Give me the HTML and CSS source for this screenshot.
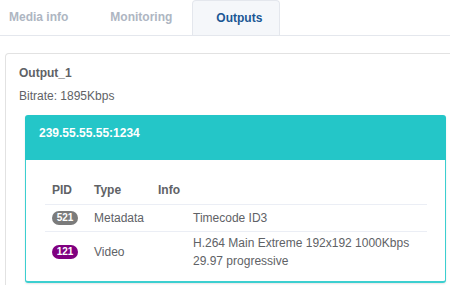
FILE: index.html
```html
<html lang="en">
<head>
<meta charset="UTF-8">
<meta name="viewport" content="width=device-width, initial-scale=1.0">
<title>Outputs</title>
<link rel="stylesheet" href="styles.css">
</head>
<body>
<div class="tabs">
  <div class="tab first">Media info</div>
  <div class="tab">Monitoring</div>
  <div class="tab active">Outputs</div>
</div>
<div class="card">
  <div class="output-name">Output_1</div>
  <div class="bitrate">Bitrate: 1895Kbps</div>
  <div class="stream">
    <div class="stream-head">239.55.55.55:1234</div>
    <div class="stream-body">
      <div class="pid-table">
        <div class="row head">
          <div class="cell">PID</div>
          <div class="cell">Type</div>
          <div class="cell">Info</div>
          <div class="cell"></div>
        </div>
        <div class="row">
          <div class="cell"><span class="badge gray">521</span></div>
          <div class="cell">Metadata</div>
          <div class="cell"></div>
          <div class="cell">Timecode ID3</div>
        </div>
        <div class="row tall">
          <div class="cell"><span class="badge purple">121</span></div>
          <div class="cell">Video</div>
          <div class="cell"></div>
          <div class="cell">H.264 Main Extreme 192x192 1000Kbps<br>29.97 progressive</div>
        </div>
      </div>
    </div>
  </div>
</div>
</body>
</html>
```

FILE: styles.css
```css
body {
  font-family: "Liberation Sans", Arial, sans-serif;
  font-size: 12px;
  color: #606266;
  background-color: #fff;
  margin: 0;
  padding: 0;
  height: 285px;
  overflow: hidden;
}

.tabs {
  display: flex;
  height: 35px;
  border-bottom: 1px solid #e4e7ed;
}

.tab {
  padding: 0 21px;
  line-height: 35px;
  font-weight: bold;
  color: #aeb6c2;
}

.tab.first {
  padding-left: 9px;
}

.tab.active {
  color: #1b5795;
  background-color: #f5f7fa;
  border: 1px solid #e4e7ed;
  border-bottom: none;
  border-radius: 4px 4px 0 0;
  line-height: 34px;
  padding: 0 17px 0 23px;
  margin-left: -1px;
}

.card {
  margin: 17px -20px 0 5px;
  border: 1px solid #e2e2e2;
  border-bottom: none;
  border-radius: 4px 4px 0 0;
  padding: 11px 13px 0 13px;
  height: 220px;
}

.output-name {
  font-weight: bold;
  line-height: 16px;
}

.bitrate {
  margin-top: 7px;
  line-height: 16px;
}

.stream {
  margin: 11px 0 0 6px;
  width: 421px;
  border-radius: 3px;
  box-shadow: 0 1px 2px rgba(0, 0, 0, 0.1);
}

.stream-head {
  background-color: #24c6c8;
  color: #fff;
  font-weight: bold;
  height: 45px;
  line-height: 36px;
  padding-left: 14px;
  border-radius: 3px 3px 0 0;
}

.stream-body {
  border: 1px solid #3ccfd0;
  border-top: none;
  border-bottom-width: 2px;
  border-radius: 0 0 3px 3px;
  padding: 16px 18px 9px 19px;
}

.row {
  display: grid;
  grid-template-columns: 42px 64px 35px 1fr;
  border-bottom: 1px solid #ebeef5;
}

.row:last-child {
  border-bottom: none;
}

.row.head .cell {
  font-weight: bold;
  padding: 5px 7px;
}

.cell {
  padding: 4px 7px;
  line-height: 18px;
  white-space: nowrap;
  display: flex;
  align-items: center;
}

.row.tall .cell {
  padding: 2px 7px;
}

.badge {
  display: inline-block;
  width: 26px;
  height: 14px;
  line-height: 14px;
  border-radius: 7px;
  color: #fff;
  font-size: 10px;
  font-weight: bold;
  text-align: center;
}

.badge.gray {
  background-color: #7b7b7b;
}

.badge.purple {
  background-color: #800080;
}
```
